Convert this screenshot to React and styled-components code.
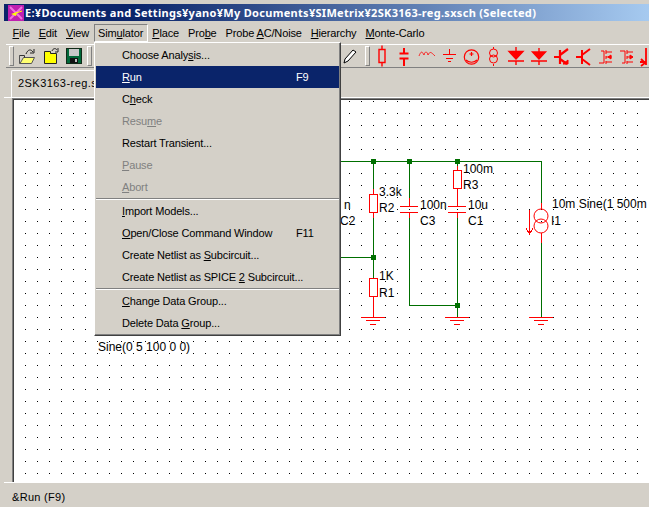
import styled, { createGlobalStyle } from "styled-components"

const Global = createGlobalStyle`
    html, body { margin: 0; padding: 0; background: #d4d0c8; }
    body { font-family: "Liberation Sans", Arial, sans-serif; font-size: 11px; letter-spacing: -0.15px; color: #000; }
`

const Win = styled.div`
    position: relative;
    width: 649px;
    height: 507px;
    overflow: hidden;
    display: flex;
    flex-direction: column;
    background: #d4d0c8;
    padding: 4px 0 0 4px;
    box-sizing: border-box;
`

const TitleBar = styled.div`
    display: flex;
    align-items: center;
    gap: 1px;
    height: 17px;
    flex: none;
    padding-left: 4px;
    background: linear-gradient(to right, #0a246a 0%, #0a246a 20%, #a6caf0 100%);
    color: #fff;
    font-family: "Noto Sans", sans-serif;
    font-weight: 700;
    font-size: 11px;
    letter-spacing: 0.3px;
    white-space: nowrap;
`

const MenuBar = styled.div`
    display: flex;
    align-items: center;
    height: 23px;
    flex: none;
    padding-left: 4px;
`

const MenuName = styled.div`
    height: 18px;
    line-height: 16px;
    padding: 0 3.5px;
    white-space: nowrap;
    box-sizing: border-box;
    border: 1px solid transparent;
    ${p => p.$open && "border-color: #808080 #fff #fff #808080;"}
    & u { text-underline-offset: 1px; }
`

const ToolBar = styled.div`
    display: flex;
    align-items: center;
    height: 24px;
    flex: none;
    margin-left: 2px;
    border-top: 1px solid #fff;
    border-bottom: 1px solid #808080;
    box-sizing: border-box;
`

const Handle = styled.div`
    width: 3px;
    height: 18px;
    flex: none;
    margin: ${p => p.$margin};
    border: 1px solid;
    border-color: #fff #808080 #808080 #fff;
`

const Tool = styled.svg`
    flex: none;
    height: 22px;
    fill: none;
    stroke: #f00;
    stroke-width: 1;
`

const ToolIcon = styled.svg`
    flex: none;
    margin-right: ${p => p.$gap || 0}px;
`

const TabStrip = styled.div`
    display: flex;
    align-items: flex-end;
    height: 30px;
    flex: none;
    padding-left: 7px;
    border-bottom: 1px solid #fff;
    box-sizing: border-box;
`

const Tab = styled.div`
    height: 27px;
    width: 130px;
    padding: 6px 0 0 6px;
    box-sizing: border-box;
    border-top: 1px solid #fff;
    border-left: 1px solid #fff;
    border-right: 1px solid #808080;
    border-radius: 2px 2px 0 0;
    letter-spacing: 0.45px;
`

const Canvas = styled.div`
    position: relative;
    flex: none;
    width: 637px;
    height: 384px;
    margin-left: 8px;
    background: #fff;
    overflow: hidden;
`

const Edge = styled.div`
    position: absolute;
    inset: 0;
    box-shadow: inset 1px 1px 0 #808080, inset 2px 2px 0 #404040;
    pointer-events: none;
`

const Sheet = styled.svg`
    display: block;
`

const Wire = styled.path`
    fill: none;
    stroke: #006f00;
    stroke-width: 1;
    shape-rendering: crispEdges;
`

const Part = styled.path`
    fill: none;
    stroke: #f00;
    stroke-width: 1;
    shape-rendering: crispEdges;
`

const Ring = styled.circle`
    fill: none;
    stroke: #f00;
    stroke-width: 1;
`

const Label = styled.text`
    font-family: "Liberation Sans", Arial, sans-serif;
    font-size: 12px;
    letter-spacing: 0;
    fill: #000;
`

const StatusBar = styled.div`
    flex: 1;
    display: flex;
    align-items: center;
    padding: 3px 0 0 8px;
    border-top: 1px solid #fff;
    letter-spacing: 0.3px;
`

const Menu = styled.div`
    position: absolute;
    left: 94px;
    top: 42px;
    width: 247px;
    height: 294px;
    box-sizing: border-box;
    padding: 1px 1px;
    background: #d4d0c8;
    border: 1px solid;
    border-color: #fff #404040 #404040 #fff;
    box-shadow: inset -1px -1px 0 #808080;
`

const Item = styled.div`
    display: flex;
    justify-content: space-between;
    height: 22px;
    line-height: 23px;
    padding-left: 26px;
    white-space: nowrap;
    color: ${p => (p.$dim ? "#808080" : p.$on ? "#fff" : "#000")};
    background: ${p => (p.$on ? "#0a246a" : "transparent")};
    & u { text-underline-offset: 1px; }
`

const Key = styled.span`
    width: 43px;
    flex: none;
`

const Sep = styled.div`
    height: 0;
    border-top: 1px solid #808080;
    border-bottom: 1px solid #fff;
`

const Ground = ({ x, y }) => (
    <Part d={`M${x - 12} ${y}H${x + 12}M${x - 7} ${y + 3}H${x + 7}M${x - 3} ${y + 7}H${x + 3}`} />
)

const Res = ({ x, y, h = 18 }) => (
    <rect x={x - 4} y={y} width={8} height={h} fill="#fff" stroke="#f00" shapeRendering="crispEdges" />
)

const Dot = ({ x, y }) => <rect x={x - 2} y={y - 2} width={5} height={5} fill="#006f00" />

const Schematic = () => (
    <Sheet width="637" height="384" viewBox="12 98 637 384">
        <defs>
            <pattern id="grid" x="13" y="101" width="12" height="12" patternUnits="userSpaceOnUse">
                <rect width="1" height="1" fill="#000" />
            </pattern>
        </defs>
        <rect x="13" y="100" width="636" height="382" fill="url(#grid)" />
        <Wire d="M340 161.5H541.5V208M373.5 161V194M373.5 213V278M340 257.5H373.5M373.5 297V305" />
        <Wire d="M409.5 161V198M409.5 212V305.5H457.5M457.5 161V170M457.5 188V198M457.5 212V317M541.5 236V317" />
        <Part d="M373.5 189V194M373.5 213V218M373.5 297V317M457.5 166V170M457.5 188V206M457.5 212V218M409.5 198V206M409.5 212V218" />
        <Part d="M400 206.5H418M400 212.5H418M448 206.5H466M448 212.5H466M541.5 203V209M541.5 233V243" />
        <Res x={373.5} y={194.5} />
        <Res x={373.5} y={278.5} />
        <Res x={457.5} y={170.5} />
        <Ring cx="541" cy="216" r="7" />
        <Ring cx="541" cy="226" r="7" />
        <Part d="M529.5 210V233M526 228L529.5 234L533 228" />
        <Ground x={373} y={317} />
        <Ground x={457} y={317} />
        <Ground x={541} y={317} />
        <Dot x={373} y={161} />
        <Dot x={409} y={161} />
        <Dot x={457} y={161} />
        <Dot x={373} y={257} />
        <Dot x={457} y={305} />
        <Label x="463" y="173">100m</Label>
        <Label x="463" y="189">R3</Label>
        <Label x="379" y="196">3.3k</Label>
        <Label x="379" y="212">R2</Label>
        <Label x="420" y="209">100n</Label>
        <Label x="420" y="225">C3</Label>
        <Label x="468" y="209">10u</Label>
        <Label x="468" y="225">C1</Label>
        <Label x="552" y="208">10m Sine(1 500m</Label>
        <Label x="551" y="225">I1</Label>
        <Label x="379" y="280">1K</Label>
        <Label x="379" y="297">R1</Label>
        <Label x="344" y="209">n</Label>
        <Label x="340" y="225">C2</Label>
        <Label x="98" y="351">Sine(0 5 100 0 0)</Label>
    </Sheet>
)

const AppIcon = () => (
    <svg width="16" height="16" viewBox="0 0 16 16">
        <rect width="16" height="16" fill="#c020b0" />
        <path d="M2 2L14 14M2 14L14 2" stroke="#f070e0" strokeWidth="2" />
        <path d="M3 9L9 7L8 11Z" fill="#ff0" />
        <path d="M8 8L14 6" stroke="#ff0" />
    </svg>
)

const OpenIcon = () => (
    <ToolIcon width="16" height="16" viewBox="0 0 16 16" $gap={9}>
        <path d="M0.5 7.5V15.5H12.5L15.5 9.5H4.5L1 15.5" fill="#ffff70" stroke="#555" />
        <path d="M0.5 7.5H5.5V9.5" fill="none" stroke="#333" />
        <path d="M7 6C9 1 12 1 14 4M15 1V5H11" fill="none" stroke="#222" />
    </ToolIcon>
)

const NewIcon = () => (
    <ToolIcon width="15" height="16" viewBox="0 0 15 16" $gap={7}>
        <path d="M0.5 3.5H6.5V5.5H12.5V15.5H0.5Z" fill="#ff0" stroke="#222" />
        <path d="M8 3C9 0 12 0 13 2M14 0V4H11" fill="none" stroke="#222" />
    </ToolIcon>
)

const SaveIcon = () => (
    <ToolIcon width="16" height="16" viewBox="0 0 16 16" $gap={5}>
        <rect x="0.5" y="0.5" width="15" height="15" fill="#006838" stroke="#102a18" />
        <rect x="3" y="1" width="10" height="7" fill="#c8c8c8" />
        <rect x="4" y="10" width="8" height="5" fill="#111" />
        <rect x="9" y="11" width="2" height="3" fill="#c0c0c0" />
    </ToolIcon>
)

const PenIcon = () => (
    <ToolIcon width="14" height="16" viewBox="0 0 14 16">
        <path d="M1 15L2 11L10 2L13 4L5 13Z" fill="#fff" stroke="#000" />
    </ToolIcon>
)

// widths keep the red part icons on the reference's spacing, paths are centred per width
const tools = [
    { w: 22, d: "M11 0.5V4.5M8 4.5H14V17.5H8ZM11 17.5V21.5", s: 1.4 },
    { w: 22, d: "M11 3V8M6.5 8.5H15.5M6.5 13.5H15.5M11 14V21", s: 2 },
    { w: 24, d: "M4 11C6 6 7 6 9 10C10 6 12 6 13 10C15 6 16 7 20 11", s: 0.8 },
    { w: 21, d: "M10.5 4V9.5M4 9.5H17M7 13.5H14M9 16.5H12", s: 1 },
    { w: 23, d: "M11.5 7V11M9.5 9H13.5M6 15C9 18 14 18 17 15", ring: [[11.5, 12, 7.2]], s: 1.2 },
    { w: 21, d: "M10.5 2V4M10.5 19V21", ring: [[10.5, 8, 4], [10.5, 14, 4]], s: 1 },
    { w: 24, d: "M5 6.5H19L12 14ZM4 16H20M12 16V20M12 2V6", fill: true, s: 1.4 },
    { w: 22, d: "M4.5 7H17.5L11 14ZM3 16H19M11 16V20M11 3V7", fill: true, s: 1.4 },
    { w: 22, d: "M4 12H10M10 5V19M10 10L18 4M10 14L17 19", extra: "M13 19H18V15Z", s: 2.2 },
    { w: 22, d: "M4 12H10M10 5V19M10 10L18 4M10 14L18 20", s: 2 },
    { w: 22, d: "M5 18H10V6H7M12 5V9M12 11V14M12 16V19M12 7H18M12 12H18M12 17H18", extra: "M14 12L17 10V14Z", s: 1 },
    { w: 22, d: "M4 6H9V18H6M11 5V9M11 11V14M11 16V19M11 7H17M11 12H17M11 17H17", extra: "M17 12L14 10V14Z", s: 1 },
    { w: 22, d: "M8 3V20M2 17H8M3 14L7 18L3 21", s: 1.8 },
]

const Simulator = () => (
    <Menu>
        <Item><span>Choose Analy<u>s</u>is...</span></Item>
        <Item $on><span><u>R</u>un</span><Key>F9</Key></Item>
        <Item><span>C<u>h</u>eck</span></Item>
        <Item $dim><span>Resu<u>m</u>e</span></Item>
        <Item><span>Restart Transient...</span></Item>
        <Item $dim><span><u>P</u>ause</span></Item>
        <Item $dim><span><u>A</u>bort</span></Item>
        <Sep />
        <Item><span><u>I</u>mport Models...</span></Item>
        <Item><span><u>O</u>pen/Close Command Window</span><Key>F11</Key></Item>
        <Item><span>Create Netlist as <u>S</u>ubcircuit...</span></Item>
        <Item><span>Create Netlist as SPICE <u>2</u> Subcircuit...</span></Item>
        <Sep />
        <Item><span><u>C</u>hange Data Group...</span></Item>
        <Item><span>Delete Data <u>G</u>roup...</span></Item>
    </Menu>
)

export default function App() {
    return (
        <Win>
            <Global />
            <TitleBar>
                <AppIcon />
                E:¥Documents and Settings¥yano¥My Documents¥SIMetrix¥2SK3163-reg.sxsch (Selected)
            </TitleBar>
            <MenuBar>
                <MenuName><u>F</u>ile</MenuName>
                <MenuName><u>E</u>dit</MenuName>
                <MenuName><u>V</u>iew</MenuName>
                <MenuName $open>Sim<u>u</u>lator</MenuName>
                <MenuName><u>P</u>lace</MenuName>
                <MenuName>Pro<u>b</u>e</MenuName>
                <MenuName>Probe <u>A</u>C/Noise</MenuName>
                <MenuName><u>H</u>ierarchy</MenuName>
                <MenuName><u>M</u>onte-Carlo</MenuName>
            </MenuBar>
            <ToolBar>
                <Handle $margin="0 5px 0 3px" />
                <OpenIcon />
                <NewIcon />
                <SaveIcon />
                <Handle $margin="0 251px 0 0" />
                <PenIcon />
                <Handle $margin="0 1px 0 8px" />
                {tools.map((t, i) => (
                    <Tool key={i} width={t.w} viewBox={`0 0 ${t.w} 22`}>
                        <path d={t.d} fill={t.fill ? "#f00" : "none"} strokeWidth={t.s} />
                        {t.extra && <path d={t.extra} fill="#f00" />}
                        {t.ring && t.ring.map((r, j) => <circle key={j} cx={r[0]} cy={r[1]} r={r[2]} strokeWidth={t.s} />)}
                    </Tool>
                ))}
            </ToolBar>
            <TabStrip>
                <Tab>2SK3163-reg.sxsch</Tab>
            </TabStrip>
            <Canvas>
                <Schematic />
                <Edge />
            </Canvas>
            <StatusBar>&amp;Run (F9)</StatusBar>
            <Simulator />
        </Win>
    )
}
